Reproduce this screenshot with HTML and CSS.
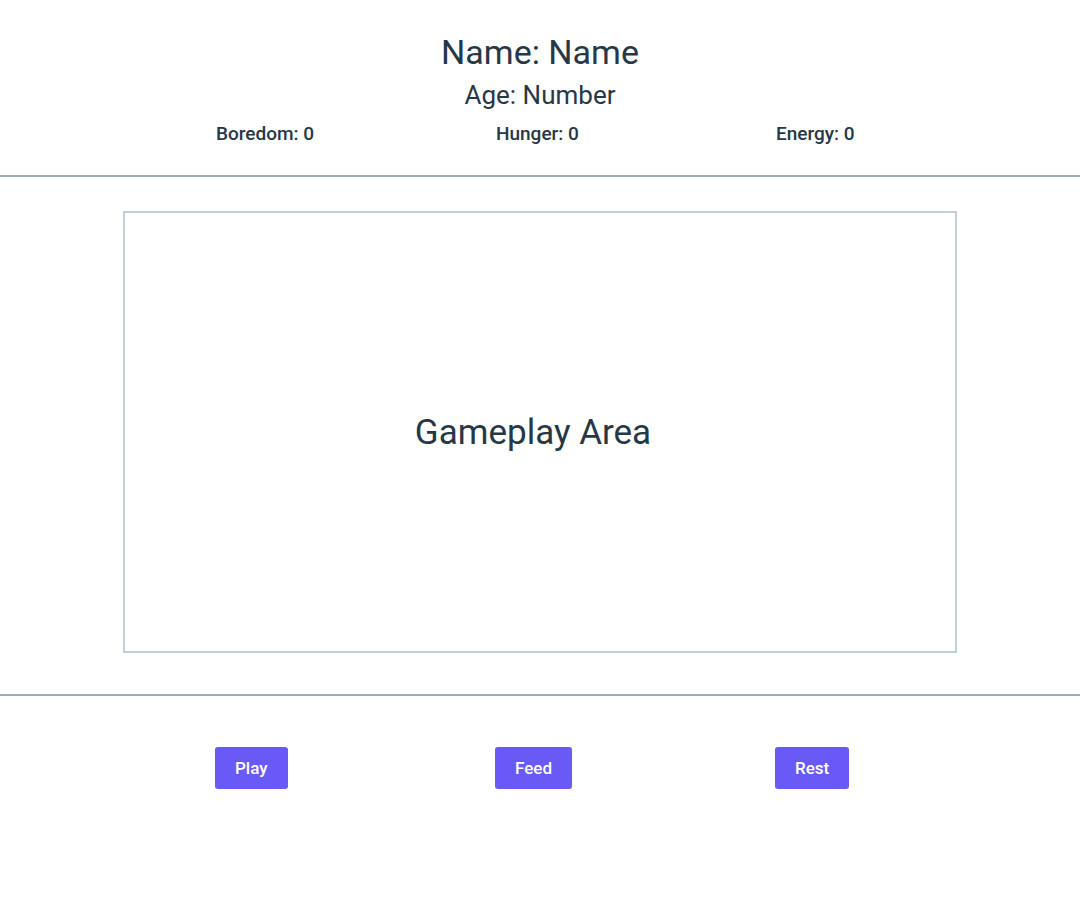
FILE: index.html
```html
<!DOCTYPE html>
<html>
<head>
<meta charset="utf-8">
<link rel="stylesheet" href="styles.css">
</head>
<body>
<header class="header">
  <h1 class="name">Name: Name</h1>
  <h2 class="age">Age: Number</h2>
  <div class="stats">
    <div class="stat">Boredom: 0</div>
    <div class="stat">Hunger: 0</div>
    <div class="stat">Energy: 0</div>
  </div>
</header>
<main class="main">
  <div class="game">Gameplay Area</div>
</main>
<footer class="controls">
  <div class="cell"><button class="btn">Play</button></div>
  <div class="cell"><button class="btn">Feed</button></div>
  <div class="cell"><button class="btn">Rest</button></div>
</footer>
</body>
</html>
```
FILE: styles.css
```css
* { box-sizing: border-box; }
body {
  margin: 0;
  font-family: Roboto, "Noto Sans", sans-serif;
  color: #263746;
  background: #fff;
}
.header {
  display: flex;
  flex-direction: column;
  align-items: center;
  padding-top: 30px;
  height: 177px;
  border-bottom: 2px solid #9eacb8;
}
.name {
  margin: 0;
  font-size: 34px;
  font-weight: 400;
  line-height: 44px;
}
.age {
  margin: 5px 0 0;
  font-size: 26px;
  font-weight: 400;
  line-height: 32px;
}
.stats {
  display: grid;
  grid-template-columns: repeat(3, 90px);
  column-gap: 190px;
  width: 650px;
  margin-top: 11px;
}
.stat {
  font-size: 19px;
  font-weight: 500;
  line-height: 24px;
  white-space: nowrap;
  padding-left: 1px;
}
.main {
  padding: 34px 123px 41px;
  height: 519px;
  border-bottom: 2px solid #9eacb8;
}
.game {
  height: 442px;
  border: 2px solid #c3cfd7;
  display: flex;
  align-items: center;
  justify-content: center;
  padding-right: 14px;
  font-size: 35px;
  font-weight: 400;
}
.controls {
  display: grid;
  grid-template-columns: repeat(3, 90px);
  column-gap: 190px;
  width: 650px;
  margin: 51px auto 0;
}
.btn {
  height: 42px;
  padding: 0 20px;
  border: none;
  border-radius: 3px;
  background: #6959f6;
  color: #fff;
  font-family: Roboto, "Noto Sans", sans-serif;
  font-size: 17px;
  font-weight: 500;
}
```
